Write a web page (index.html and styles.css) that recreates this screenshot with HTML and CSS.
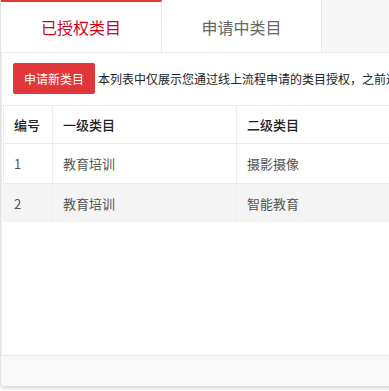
FILE: index.html
```html
<!DOCTYPE html>
<html lang="zh">
<head>
<meta charset="utf-8">
<link rel="stylesheet" href="styles.css">
</head>
<body>
<div class="panel">
  <div class="tabs">
    <div class="tab tab-active">已授权类目</div>
    <div class="tab">申请中类目</div>
    <div class="tab-rest"></div>
  </div>
  <div class="content">
    <div class="toolbar">
      <button class="btn">申请新类目</button>
      <span class="note">本列表中仅展示您通过线上流程申请的类目授权，之前通过线下方式申请的类目请联系客服查询</span>
    </div>
    <table class="grid">
      <thead>
        <tr><th class="c1">编号</th><th class="c2">一级类目</th><th class="c3">二级类目</th></tr>
      </thead>
      <tbody>
        <tr><td>1</td><td>教育培训</td><td>摄影摄像</td></tr>
        <tr class="alt"><td>2</td><td>教育培训</td><td>智能教育</td></tr>
      </tbody>
    </table>
  </div>
  <div class="footer"></div>
</div>
</body>
</html>
```

FILE: styles.css
```css
html, body {
  margin: 0;
  padding: 0;
  overflow: hidden;
  background: #ffffff;
}
body {
  font-family: "Noto Sans CJK SC", "Noto Sans", sans-serif;
  color: #333;
  width: 389px;
  height: 391px;
}
.panel {
  width: 720px;
  height: 386px;
  border-left: 1px solid #e2e2e2;
  box-shadow: 1px 2px 4px rgba(0,0,0,0.18);
  display: flex;
  flex-direction: column;
  background: #fff;
}
.tabs {
  display: flex;
  height: 52px;
  flex: none;
}
.tab {
  width: 160px;
  box-sizing: border-box;
  border-right: 1px solid #e8e8e8;
  display: flex;
  align-items: center;
  justify-content: center;
  font-size: 16px;
  color: #666;
  background: #fff;
  padding-top: 2px;
}
.tab-active {
  width: 161px;
  border-top: 2px solid #e53935;
  color: #d0021b;
  padding-top: 0;
}
.tab-rest {
  flex: 1;
  background: #f7f7f7;
}
.content {
  flex: 1;
  border-top: 1px solid #ececec;
  border-left: 1px solid #ececec;
  display: flex;
  flex-direction: column;
}
.toolbar {
  display: flex;
  align-items: center;
  gap: 3px;
  padding: 10px 0 11px 11px;
  white-space: nowrap;
}
.btn {
  height: 31px;
  padding: 0 11px;
  border: none;
  border-radius: 2px;
  background: #e2373a;
  color: #fff;
  font-family: inherit;
  font-size: 12px;
  line-height: 31px;
}
.note {
  font-size: 12px;
  color: #222;
}
.grid {
  border-collapse: collapse;
  width: 700px;
  margin-left: 1px;
  font-size: 13px;
}
.grid th, .grid td {
  border: 1px solid #ececec;
  text-align: left;
  padding: 0 10px;
  white-space: nowrap;
}
.grid th {
  height: 37px;
  font-weight: 500;
  color: #222;
}
.grid td {
  height: 39px;
  color: #555;
}
.grid tr.alt td {
  background: #f4f4f4;
  height: 38px;
}
.grid tbody tr:last-child td {
  border-bottom: none;
}
.c1 { width: 28px; }
.c2 { width: 163px; }
.footer {
  height: 30px;
  flex: none;
  background: #f8f8f8;
  border-top: 1px solid #e8e8e8;
}
```
